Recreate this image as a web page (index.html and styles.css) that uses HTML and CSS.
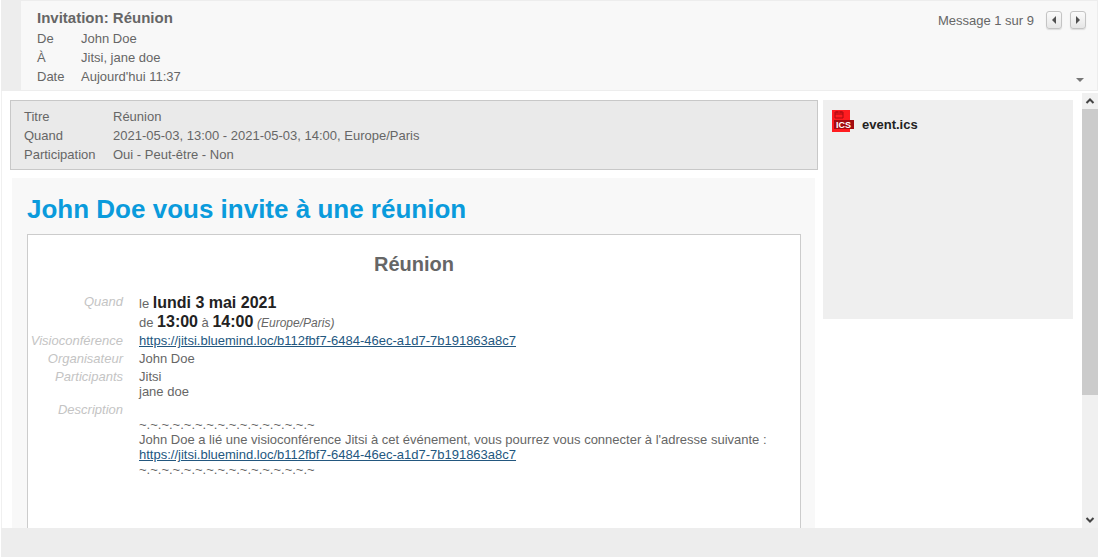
FILE: index.html
```html
<!DOCTYPE html>
<html lang="fr">
<head>
<meta charset="utf-8">
<title>Invitation: Réunion</title>
<link rel="stylesheet" href="styles.css">
</head>
<body>
<div class="shell">
  <header class="message-header">
    <div class="summary">
      <h1 class="subject">Invitation: Réunion</h1>
      <dl class="fields">
        <dt>De</dt><dd>John Doe</dd>
        <dt>À</dt><dd>Jitsi, jane doe</dd>
        <dt>Date</dt><dd>Aujourd'hui 11:37</dd>
      </dl>
    </div>
    <div class="controls">
      <div class="pager">
        <span class="pager-label">Message 1 sur 9</span>
        <button class="nav-button" type="button" aria-label="Message précédent"><svg width="6" height="8" viewBox="0 0 6 8"><path d="M5 0v8L1 4z" fill="#505050"/></svg></button>
        <button class="nav-button" type="button" aria-label="Message suivant"><svg width="6" height="8" viewBox="0 0 6 8"><path d="M1 0v8l4-4z" fill="#505050"/></svg></button>
      </div>
      <button class="expand" type="button" aria-label="Afficher les détails"><svg width="8" height="4" viewBox="0 0 8 4"><path d="M0 0h8L4 4z" fill="#777"/></svg></button>
    </div>
  </header>
  <main class="viewport">
    <div class="message">
      <dl class="fields event-box">
        <dt>Titre</dt><dd>Réunion</dd>
        <dt>Quand</dt><dd>2021-05-03, 13:00 - 2021-05-03, 14:00, Europe/Paris</dd>
        <dt>Participation</dt><dd>Oui - Peut-être - Non</dd>
      </dl>
      <article class="mail">
        <h2 class="mail-title">John Doe vous invite à une réunion</h2>
        <section class="card">
          <h3 class="card-title">Réunion</h3>
          <table class="details">
            <tr><th scope="row">Quand</th><td class="when"><div>le <strong>lundi 3 mai 2021</strong></div><div>de <strong>13:00</strong> à <strong>14:00</strong> <em>(Europe/Paris)</em></div></td></tr>
            <tr><th scope="row">Visioconférence</th><td><a href="#">https://jitsi.bluemind.loc/b112fbf7-6484-46ec-a1d7-7b191863a8c7</a></td></tr>
            <tr><th scope="row">Organisateur</th><td>John Doe</td></tr>
            <tr><th scope="row">Participants</th><td>Jitsi<br>jane doe</td></tr>
            <tr><th scope="row">Description</th><td><br>~.~.~.~.~.~.~.~.~.~.~.~.~.~.~.~<br>John Doe a lié une visioconférence Jitsi à cet événement, vous pourrez vous connecter à l'adresse suivante :<br><a href="#">https://jitsi.bluemind.loc/b112fbf7-6484-46ec-a1d7-7b191863a8c7</a><br>~.~.~.~.~.~.~.~.~.~.~.~.~.~.~.~</td></tr>
          </table>
        </section>
      </article>
    </div>
    <aside class="attachments">
      <div class="attachment">
        <svg class="file-icon" width="24" height="24" viewBox="0 0 24 24" role="img" aria-label="Fichier ICS">
          <path d="M1 1h18v22H1z" fill="#ff1c20"/>
          <path d="M4 3h8v6H4zM4 5h8" fill="none" stroke="#a90b10"/>
          <path d="M6 2v2M10 2v2" fill="none" stroke="#a90b10"/>
          <path d="M3 11h20v9H3z" fill="#a30b10"/>
          <text class="file-type" x="5" y="19">ICS</text>
        </svg>
        <span class="file-name">event.ics</span>
      </div>
    </aside>
    <div class="scrollbar">
      <button class="scroll-button" type="button" aria-label="Défiler vers le haut"><svg width="10" height="8" viewBox="0 0 10 8"><path d="M1.500 6 5 2.500 8.500 6" fill="none" stroke="#444" stroke-width="2"/></svg></button>
      <div class="scroll-track"><div class="scroll-thumb"></div></div>
      <button class="scroll-button" type="button" aria-label="Défiler vers le bas"><svg width="10" height="8" viewBox="0 0 10 8"><path d="M1.500 2 5 5.500 8.500 2" fill="none" stroke="#444" stroke-width="2"/></svg></button>
    </div>
  </main>
  <footer class="bottom-bar"></footer>
</div>
</body>
</html>
```

FILE: styles.css
```css
* { box-sizing: border-box; }

body {
  margin: 0;
  background: #fff;
  color: #666;
  font: 13px/15px "Liberation Sans", Arial, sans-serif;
}

h1, h2, h3, dl, dd { margin: 0; }

button {
  display: flex;
  align-items: center;
  justify-content: center;
  padding: 0;
  border: 0;
  background: none;
}

.shell {
  display: flex;
  flex-direction: column;
  height: 100vh;
  padding: 0 2px 0 1px;
  overflow: hidden;
}

.message-header {
  display: flex;
  justify-content: space-between;
  flex: none;
  padding: 7px 11px 4px 16px;
  border: 1px solid #ededed;
  border-left: 20px solid #ededed;
  background: #f8f8f8;
}

.subject {
  margin-bottom: 2px;
  font-size: 15px;
  line-height: 19px;
}

.fields {
  display: grid;
  grid-template-columns: 44px 1fr;
  line-height: 19px;
}

.controls {
  display: flex;
  flex-direction: column;
  align-items: flex-end;
  justify-content: space-between;
  padding: 3px 0 4px;
}

.pager {
  display: flex;
  align-items: center;
  gap: 8px;
}

.pager-label { margin-right: 4px; }

.nav-button {
  width: 16px;
  height: 18px;
  border: 1px solid #c4c4c4;
  border-radius: 3px;
  background: linear-gradient(#fbfbfb, #e6e6e6);
  box-shadow: 0 1px 1px #ddd;
}

.expand { margin-right: 2px; }

.viewport {
  display: flex;
  flex: 1;
  min-height: 0;
  border-left: 1px solid #f0f0f0;
}

.message {
  display: flex;
  flex: 1;
  flex-direction: column;
  gap: 8px;
  padding: 9px 5px 0 8px;
}

.event-box {
  grid-template-columns: 89px 1fr;
  padding: 6px 13px 5px;
  border: 1px solid #c8c8c8;
  background: #eaeaea;
}

.mail {
  display: flex;
  flex: 1;
  flex-direction: column;
  margin: 0 3px 0 2px;
  padding: 15px 14px 0 15px;
  background: #f8f8f8;
}

.mail-title {
  margin-bottom: 9px;
  color: #0a9bdc;
  font-size: 26px;
  line-height: 32px;
}

.card {
  flex: 1;
  border: 1px solid #ccc;
  border-bottom: 0;
  background: #fff;
}

.card-title {
  margin: 18px 0 17px;
  font-size: 20px;
  line-height: 23px;
  text-align: center;
}

.details { border-spacing: 0; }

.details th {
  width: 95px;
  padding: 1px 0 2px;
  color: #c4c4c4;
  font-style: italic;
  font-weight: normal;
  text-align: right;
  vertical-align: top;
}

.details td { padding: 1px 0 2px 16px; }

.details a { color: #23577f; }

.details .when {
  padding-bottom: 0;
  line-height: 19px;
}

.when strong {
  color: #222;
  font-size: 16px;
  line-height: 16px;
}

.when em {
  font-size: 12px;
  line-height: 16px;
}

.attachments {
  width: 250px;
  height: 219px;
  margin: 9px 9px 0 0;
  padding: 9px 8px;
  background: #efefef;
}

.attachment {
  display: flex;
  align-items: center;
  gap: 7px;
}

.file-type {
  fill: #fff;
  font-size: 9px;
  font-weight: bold;
}

.file-name {
  padding-top: 6px;
  color: #222;
  font-weight: bold;
}

.scrollbar {
  display: flex;
  flex-direction: column;
  width: 16px;
  margin-top: 2px;
  background: #f0f0f0;
}

.scroll-button {
  width: 16px;
  height: 16px;
}

.scroll-track { flex: 1; }

.scroll-thumb {
  height: 71%;
  background: #cbcbcb;
}

.bottom-bar {
  flex: none;
  height: 29px;
  background: #ededed;
}
```
